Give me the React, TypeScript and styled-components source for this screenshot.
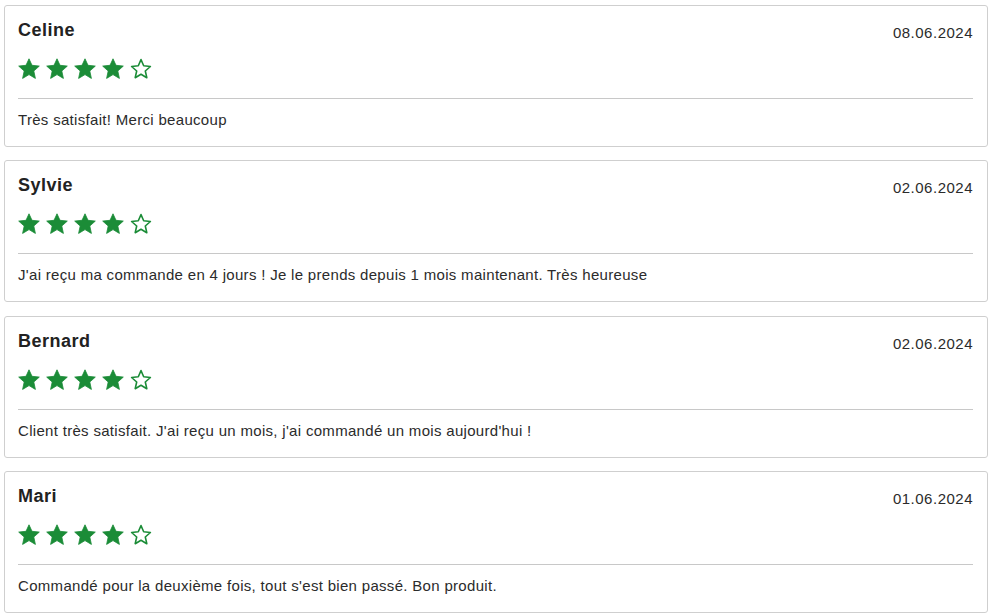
import React from "react";
import styled, { createGlobalStyle } from "styled-components";

const Global = createGlobalStyle`
  html, body { margin: 0; padding: 0; background: #fff; }
  body { font-family: "Liberation Sans", Arial, sans-serif; color: #2b2b2b; }
`;

const List = styled.div`
  display: flex;
  flex-direction: column;
  gap: 13.34px;
  padding: 5px 3px 0 4px;
`;

const Card = styled.div`
  border: 1px solid #cfcfcf;
  border-radius: 3px;
  padding: 13px 14px 0 13px;
  height: 142px;
  box-sizing: border-box;
`;

const Header = styled.div`
  display: flex;
  justify-content: space-between;
  align-items: flex-start;
`;

const Name = styled.div`
  font-size: 18px;
  font-weight: 700;
  line-height: 22px;
  letter-spacing: 0.5px;
  color: #222;
`;

const DateText = styled.div`
  font-size: 15px;
  line-height: 20px;
  margin-top: 4px;
  letter-spacing: 0.5px;
  color: #2b2b2b;
`;

const Stars = styled.div`
  display: flex;
  gap: 6px;
  margin-top: 15px;
  height: 22px;
`;

const Divider = styled.div`
  height: 1px;
  background: #c8c8c8;
  margin-top: 18px;
`;

const Body = styled.div`
  font-size: 15px;
  line-height: 20px;
  margin-top: 11px;
  letter-spacing: 0.31px;
  color: #2b2b2b;
`;

const STAR = "M11 0.8 L14 7.3 L21.3 8.1 L15.8 13 L17.4 20.4 L11 16.6 L4.6 20.4 L6.2 13 L0.7 8.1 L8 7.3 Z";
const STAR_OUT = "M11 1.6 L13.7 7.8 L20.4 8.5 L15.3 13 L16.8 19.7 L11 16.2 L5.2 19.7 L6.7 13 L1.6 8.5 L8.3 7.8 Z";

const Star: React.FC<{ filled: boolean }> = ({ filled }) => (
  <svg width="22" height="22" viewBox="0 0 22 22">
    {filled ? (
      <path d={STAR} fill="#1b8c37" stroke="#1b8c37" strokeWidth="0.8" strokeLinejoin="round" />
    ) : (
      <path d={STAR_OUT} fill="none" stroke="#1b8c37" strokeWidth="1.6" strokeLinejoin="round" />
    )}
  </svg>
);

const reviews = [
  { name: "Celine", date: "08.06.2024", text: "Très satisfait! Merci beaucoup" },
  { name: "Sylvie", date: "02.06.2024", text: "J'ai reçu ma commande en 4 jours ! Je le prends depuis 1 mois maintenant. Très heureuse" },
  { name: "Bernard", date: "02.06.2024", text: "Client très satisfait. J'ai reçu un mois, j'ai commandé un mois aujourd'hui !" },
  { name: "Mari", date: "01.06.2024", text: "Commandé pour la deuxième fois, tout s'est bien passé. Bon produit." },
];

export default function App() {
  return (
    <>
      <Global />
      <List>
        {reviews.map((r) => (
          <Card key={r.name}>
            <Header>
              <Name>{r.name}</Name>
              <DateText>{r.date}</DateText>
            </Header>
            <Stars>
              {[0, 1, 2, 3, 4].map((i) => (
                <Star key={i} filled={i < 4} />
              ))}
            </Stars>
            <Divider />
            <Body>{r.text}</Body>
          </Card>
        ))}
      </List>
    </>
  );
}
